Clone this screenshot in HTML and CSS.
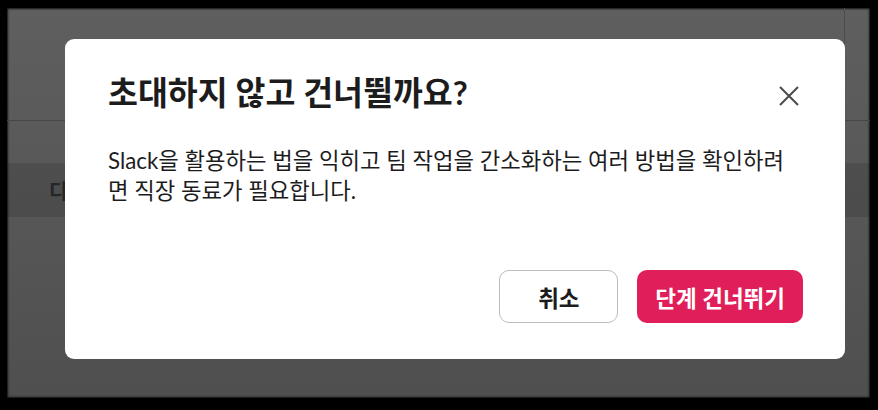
FILE: index.html
```html
<!DOCTYPE html>
<html lang="ko">
<head>
  <meta charset="UTF-8">
  <title>초대하지 않고 건너뛸까요?</title>
  <link rel="stylesheet" href="styles.css">
</head>
<body>

<div class="screen">
  <div class="topbar">
    <div class="topbar-main"></div>
    <div class="topbar-side"></div>
  </div>
  <div class="band">
    <span class="band-text">디</span>
  </div>

  <div class="modal" role="dialog">
    <div class="modal-header">
      <h1 class="modal-title">초대하지 않고 건너뛸까요?</h1>
      <button class="close" aria-label="닫기">
        <svg width="20" height="20" viewBox="0 0 20 20">
          <path d="M1 1 L19 19 M19 1 L1 19" stroke="#4a4a4a" stroke-width="2" fill="none"/>
        </svg>
      </button>
    </div>
    <p class="modal-body">Slack을 활용하는 법을 익히고 팀 작업을 간소화하는 여러 방법을 확인하려면 직장 동료가 필요합니다.</p>
    <div class="modal-footer">
      <button class="btn btn-cancel">취소</button>
      <button class="btn btn-primary">단계 건너뛰기</button>
    </div>
  </div>
</div>

</body>
</html>
```

FILE: styles.css
```css
* {
  margin: 0;
  padding: 0;
  box-sizing: border-box;
}

body {
  background: #000;
  width: 878px;
  height: 410px;
  overflow: hidden;
  font-family: "Lato", "Noto Sans CJK KR", sans-serif;
  color: #1d1c1d;
}

.screen {
  position: relative;
  margin: 8px 0 0 7px;
  width: 863px;
  height: 390px;
  background: linear-gradient(to bottom, #5f5f5f, #4f4f4f);
  box-shadow: 0 0 2px 1px rgba(0, 0, 0, 0.8) inset;
}

.topbar {
  display: flex;
  height: 113px;
  border-bottom: 1px solid #474747;
}

.topbar-main {
  flex: 1;
}

.topbar-side {
  width: 26px;
  border-left: 1px solid #4c4c4c;
}

.band {
  margin-top: 42px;
  height: 54px;
  background: rgba(0, 0, 0, 0.12);
  display: flex;
  align-items: center;
  padding-left: 42px;
}

.band-text {
  font-size: 20px;
  font-weight: bold;
  color: #262626;
}

.modal {
  position: absolute;
  left: 58px;
  top: 31px;
  width: 780px;
  height: 320px;
  background: #fff;
  border-radius: 9px;
  padding: 34px 42px 36px 43px;
  display: flex;
  flex-direction: column;
}

.modal-header {
  display: flex;
  align-items: center;
  justify-content: space-between;
  height: 40px;
}

.modal-title {
  font-size: 32.5px;
  font-weight: bold;
  line-height: 40px;
}

.close {
  background: none;
  border: none;
  width: 20px;
  height: 20px;
  margin-right: 4px;
  margin-top: 6px;
  cursor: pointer;
}

.close svg {
  display: block;
}

.modal-body {
  margin-top: 33px;
  font-size: 22.3px;
  line-height: 30px;
  padding-right: 6px;
}

.modal-footer {
  margin-top: auto;
  display: flex;
  justify-content: flex-end;
  gap: 19px;
}

.btn {
  height: 53px;
  min-width: 119px;
  padding: 0 18px;
  border-radius: 10px;
  font-family: inherit;
  font-size: 22.5px;
  font-weight: bold;
  cursor: pointer;
}

.btn-cancel {
  background: #fff;
  border: 1px solid #bcbcbc;
  color: #1d1c1d;
}

.btn-primary {
  background: #e01e5a;
  border: none;
  color: #fff;
}
```
